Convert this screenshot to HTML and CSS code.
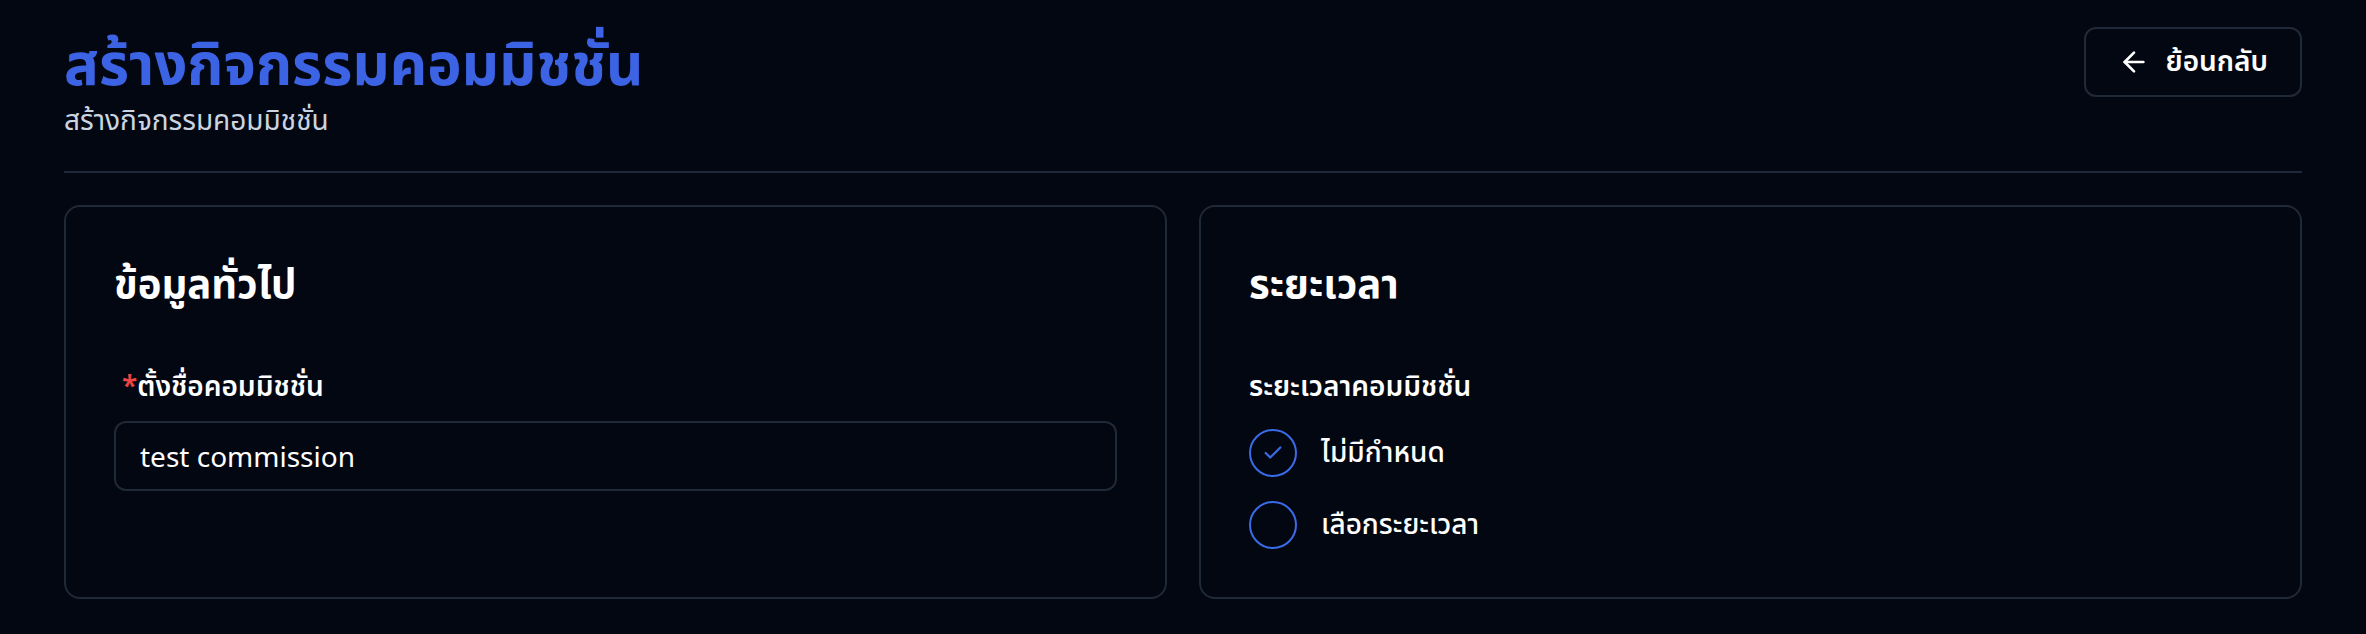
FILE: index.html
```html
<!DOCTYPE html>
<html lang="th">
<head>
<meta charset="utf-8">
<title>สร้างกิจกรรมคอมมิชชั่น</title>
<link rel="stylesheet" href="styles.css">
</head>
<body>
<div class="page">
  <header class="header">
    <div class="header-text">
      <h1 class="title">สร้างกิจกรรมคอมมิชชั่น</h1>
      <p class="subtitle">สร้างกิจกรรมคอมมิชชั่น</p>
    </div>
    <button class="back-btn" type="button">
      <svg class="back-icon" viewBox="0 0 24 24" width="32" height="32" fill="none" stroke="currentColor" stroke-width="2" stroke-linecap="round" stroke-linejoin="round"><path d="m12 19-7-7 7-7"/><path d="M19 12H5"/></svg>
      <span>ย้อนกลับ</span>
    </button>
  </header>
  <main class="grid">
    <section class="card">
      <h2 class="card-title">ข้อมูลทั่วไป</h2>
      <div class="field">
        <label class="label"><span class="req">*</span>ตั้งชื่อคอมมิชชั่น</label>
        <div class="input">test commission</div>
      </div>
    </section>
    <section class="card">
      <h2 class="card-title">ระยะเวลา</h2>
      <div class="field">
        <div class="label">ระยะเวลาคอมมิชชั่น</div>
        <div class="radios">
          <div class="radio">
            <span class="circle"><svg viewBox="0 0 24 24" width="22" height="22" fill="none" stroke="currentColor" stroke-width="2.4" stroke-linecap="round" stroke-linejoin="round"><path d="M20 6 9 17l-5-5"/></svg></span>
            <span class="radio-text">ไม่มีกำหนด</span>
          </div>
          <div class="radio">
            <span class="circle"></span>
            <span class="radio-text">เลือกระยะเวลา</span>
          </div>
        </div>
      </div>
    </section>
  </main>
</div>
</body>
</html>
```
FILE: styles.css
```css
* { box-sizing: border-box; }
html, body { margin: 0; padding: 0; }
body {
  background: #030712;
  color: #ffffff;
  font-family: "Noto Sans", "Noto Sans Thai", "Open Sans", sans-serif;
  width: 2366px;
  height: 634px;
  overflow: hidden;
}
.page { padding: 27px 64px 32px; }
.header {
  display: flex;
  justify-content: space-between;
  align-items: flex-start;
  padding-bottom: 32px;
  border-bottom: 2px solid #1f2937;
  margin-bottom: 32px;
}
.title {
  margin: 0;
  font-size: 58px;
  line-height: 72px;
  font-weight: 700;
  color: #3b63e3;
}
.subtitle {
  margin: 0;
  font-size: 28px;
  line-height: 40px;
  color: #cbd5e1;
}
.back-btn {
  height: 70px;
  padding: 0 32px;
  display: flex;
  align-items: center;
  gap: 16px;
  background: transparent;
  border: 2px solid #1f2937;
  border-radius: 12px;
  color: #ffffff;
  font-family: inherit;
  font-size: 28px;
  font-weight: 600;
}
.back-icon { flex: none; }
.grid {
  display: grid;
  grid-template-columns: 1fr 1fr;
  gap: 32px;
}
.card {
  border: 2px solid #1f2937;
  border-radius: 16px;
  padding: 48px;
}
.card-title {
  margin: 0 0 50px;
  font-size: 40px;
  line-height: 56px;
  font-weight: 700;
}
.label {
  display: block;
  font-size: 28px;
  line-height: 48px;
  font-weight: 600;
}
.req { color: #ef4444; margin-left: 8px; }
.input {
  margin-top: 12px;
  height: 70px;
  display: flex;
  align-items: center;
  padding: 0 24px;
  border: 2px solid #1f2937;
  border-radius: 12px;
  font-size: 28px;
}
.radios {
  margin-top: 20px;
  display: flex;
  flex-direction: column;
  gap: 24px;
}
.radio {
  display: flex;
  align-items: center;
  gap: 24px;
  font-size: 28px;
  font-weight: 500;
}
.circle {
  width: 48px;
  height: 48px;
  flex: none;
  border: 2px solid #3b6be8;
  border-radius: 50%;
  color: #3b6be8;
  display: flex;
  align-items: center;
  justify-content: center;
}
```
